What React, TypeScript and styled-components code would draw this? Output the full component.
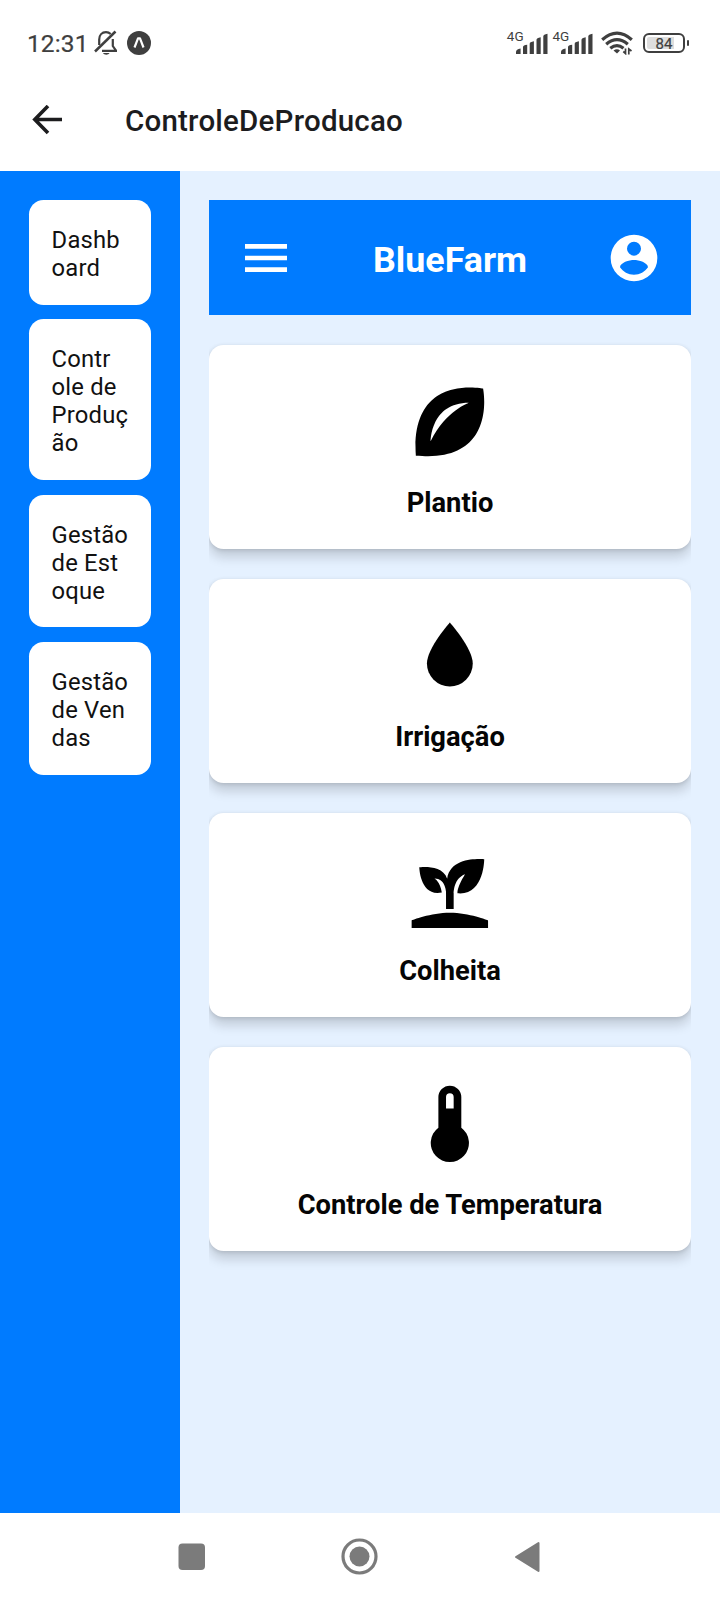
import React from "react";
import styled, { createGlobalStyle } from "styled-components";

const GlobalStyle = createGlobalStyle`
  *, *::before, *::after { box-sizing: border-box; }
  body { margin: 0; background: #ffffff; font-family: Roboto, "Liberation Sans", sans-serif; }
  svg { display: block; flex: none; }
`;

const Screen = styled.div`
  display: flex;
  flex-direction: column;
  width: 720px;
  height: 1600px;
  overflow: hidden;
  background: #ffffff;
`;

const StatusBar = styled.header`
  display: flex;
  align-items: center;
  justify-content: space-between;
  height: 86px;
  padding: 0 31px 0 27px;
  color: #3f3f3f;
`;

const StatusGroup = styled.div`
  display: flex;
  align-items: center;
`;

const Clock = styled.span`
  font-size: 24.5px;
  line-height: 28px;
  letter-spacing: 0.1px;
  width: 67px;
  padding-top: 2px;
  -webkit-text-stroke: 0.2px #3f3f3f;
`;

const AppBadge = styled.div`
  margin-left: 9px;
`;

const Signal = styled.div`
  display: flex;
  height: 24px;
  width: 45.6px;
`;

const NetworkLabel = styled.span`
  width: 9px;
  margin-top: -1px;
  font-size: 13.5px;
  line-height: 13px;
  white-space: nowrap;
`;

const SignalStrength = styled.div`
  margin-top: 2px;
`;

const WifiStatus = styled.div`
  margin: 0 10px 0 3px;
`;

const Battery = styled.div`
  display: flex;
  align-items: center;
  gap: 1.5px;
`;

const BatteryShell = styled.div`
  width: 42px;
  height: 20px;
  padding: 2px;
  border: 2px solid #3f3f3f;
  border-radius: 6px;
`;

const BatteryLevel = styled.div<{ $level: number }>`
  display: flex;
  align-items: center;
  justify-content: center;
  height: 100%;
  padding-top: 1px;
  border-radius: 2px;
  background: linear-gradient(to right, #dedede ${(p) => p.$level}%, transparent ${(p) => p.$level}%);
  font-size: 15px;
  font-weight: 400;
  line-height: 12px;
  -webkit-text-stroke: 0.2px #3f3f3f;
`;

const BatteryTip = styled.div`
  width: 2.5px;
  height: 6px;
  border-radius: 1px;
  background: #3f3f3f;
`;

const AppBar = styled.div`
  display: flex;
  align-items: center;
  height: 85px;
  padding: 0 29px 18px 32px;
  color: #1c1c1e;
`;

const ScreenTitle = styled.h1`
  margin: 2px 0 0 62px;
  font-size: 29.5px;
  font-weight: 500;
  line-height: 36px;
  letter-spacing: 0.22px;
`;

const Body = styled.div`
  display: flex;
  height: 1342px;
`;

const Sidebar = styled.nav`
  display: flex;
  flex-direction: column;
  gap: 14.6px;
  width: 180px;
  padding: 29px 29.3px;
  background: #007bff;
`;

const NavButton = styled.button`
  padding: 26px 21px 22.7px 22.3px;
  border: 0;
  border-radius: 14.6px;
  background: #ffffff;
  color: #111111;
  font: 400 23.8px/28px Roboto, "Liberation Sans", sans-serif;
  letter-spacing: 0.18px;
  text-align: left;
  white-space: pre;
`;

const Content = styled.main`
  flex: 1;
  padding: 29px 29.3px;
  background: #e5f1ff;
`;

const Scroll = styled.div`
  display: flex;
  flex-direction: column;
  gap: 29.2px;
  height: 1284px;
  overflow: hidden;
`;

const Banner = styled.div`
  display: flex;
  align-items: center;
  justify-content: space-between;
  flex: none;
  height: 115.4px;
  padding: 0 28.7px;
  background: #007bff;
  color: #ffffff;
`;

const Brand = styled.h2`
  margin: 4px 0 0;
  font-size: 35.8px;
  font-weight: 700;
  line-height: 44px;
`;

const Card = styled.section`
  display: flex;
  flex-direction: column;
  align-items: center;
  flex: none;
  height: 204.8px;
  padding-top: 31px;
  border-radius: 14.6px;
  background: #ffffff;
  box-shadow: 0 8px 12px rgba(0, 0, 0, 0.16), 0 1px 4px rgba(0, 0, 0, 0.12);
`;

const CardLabel = styled.span`
  margin-top: 18.6px;
  color: #050505;
  font-size: 27.3px;
  font-weight: 700;
  line-height: 34px;
`;

const SystemNav = styled.footer`
  display: flex;
  align-items: center;
  justify-content: space-between;
  height: 87px;
  padding: 0 180.5px 0 178px;
`;

const icons = {
  seed: "M20.7 3.3S19.3 3 17.2 3C11.7 3 2 5.1 3.1 20.9C4.3 21 5.3 21 6.3 21C24.3 21 20.7 3.3 20.7 3.3M7 17C7 17 7 7 17 7C17 7 11 9 7 17Z",
  water: "M12 20A6 6 0 0 1 6 14C6 10 12 3.25 12 3.25C12 3.25 18 10 18 14A6 6 0 0 1 12 20Z",
  sprout:
    "M2 22V20C2 20 7 18 12 18C17 18 22 20 22 20V22H2M11.3 9.1C10.1 5.2 4 6.1 4 6.1C4 6.1 4.2 13.9 9.9 12.7C9.5 9.8 8 9 8 9C10.8 9 11 12.4 11 12.4V17C11.3 17 11.7 17 12 17C12.3 17 12.7 17 13 17V12.8C13 12.8 13 8.9 16 7.9C16 7.9 14 10.9 14 12.9C21 13.6 21 4 21 4C21 4 12.1 3 11.3 9.1Z",
  thermometer:
    "M15 13V5A3 3 0 0 0 9 5V13A5 5 0 1 0 15 13M12 4A1 1 0 0 1 13 5V8H11V5A1 1 0 0 1 12 4Z",
  menu: "M3 6H21V8H3V6M3 11H21V13H3V11M3 16H21V18H3V16Z",
  account:
    "M12 19.2C9.5 19.2 7.29 17.92 6 16C6.03 14 10 12.9 12 12.9C14 12.9 17.97 14 18 16C16.71 17.92 14.5 19.2 12 19.2M12 5A3 3 0 0 1 15 8A3 3 0 0 1 12 11A3 3 0 0 1 9 8A3 3 0 0 1 12 5M12 2A10 10 0 0 0 2 12A10 10 0 0 0 12 22A10 10 0 0 0 22 12A10 10 0 0 0 12 2Z",
};

type IconName = keyof typeof icons;

function Icon({ name, size }: { name: IconName; size: number }) {
  return (
    <svg width={size} height={size} viewBox="0 0 24 24" fill="currentColor" fillRule="evenodd">
      <path d={icons[name]} />
    </svg>
  );
}

function MutedBell() {
  return (
    <svg width="24" height="26" viewBox="0 0 24 26" fill="none" stroke="#3f3f3f" strokeWidth="2.2">
      <path d="M5.200 15V9.500C5.200 5 8 2.200 12 2.200C14 2.200 15.500 2.900 16.700 4M18.800 9V16L22 20.700M8 20.900H23" />
      <path d="M1 21.500L21.500 1.500" strokeWidth="2.500" />
      <path d="M9 23H15.500C14.500 25.200 10 25.200 9 23Z" fill="#3f3f3f" stroke="none" />
    </svg>
  );
}

function ExpoBadge() {
  return (
    <svg width="24" height="24" viewBox="0 0 24 24">
      <circle cx="12" cy="12" r="12" fill="#3f3f3f" />
      <path d="M7.500 16.500L11 7.400H13L16.500 16.500" fill="none" stroke="#fff" strokeWidth="2.200" strokeLinejoin="round" />
    </svg>
  );
}

function SignalBars() {
  return (
    <svg width="33" height="22" viewBox="0 0 33 22" fill="#3f3f3f">
      <path d="M0 21V19Q0 16 4.600 15.500V21ZM7 21V14Q7 12.300 11.200 11.700V21ZM13.700 21V10.700Q13.700 9 17.900 8.300V21ZM20.500 21V6.800Q20.500 5 24.700 4.300V21ZM27.300 21V3.200Q27.300 1.500 31.500 0.700V21Z" />
    </svg>
  );
}

function Wifi() {
  return (
    <svg width="32" height="24" viewBox="0 0 32 24" fill="none" stroke="#3f3f3f" strokeWidth="3.2">
      <path d="M1.200 8.700Q16 -4.300 30.800 8.700M5.200 13.200Q16 4 26.800 13.200M9.300 17.300Q16 12 22.500 17.300" />
      <path d="M12.500 19.500Q16 17 19 19.500L16 22.500Z" fill="#3f3f3f" stroke="none" />
      <path d="M24.500 17.500V22.500L22.300 20.500M27.800 23.500V18L30.500 20" strokeWidth="1.700" />
    </svg>
  );
}

const navItems = ["Dashb\noard", "Contr\nole de\nProduç\não", "Gestão\nde Est\noque", "Gestão\nde Ven\ndas"];

const cards: { icon: IconName; label: string }[] = [
  { icon: "seed", label: "Plantio" },
  { icon: "water", label: "Irrigação" },
  { icon: "sprout", label: "Colheita" },
  { icon: "thermometer", label: "Controle de Temperatura" },
];

function NetworkSignal() {
  return (
    <Signal>
      <NetworkLabel>4G</NetworkLabel>
      <SignalStrength>
        <SignalBars />
      </SignalStrength>
    </Signal>
  );
}

export default function App() {
  return (
    <Screen>
      <GlobalStyle />
      <StatusBar>
        <StatusGroup>
          <Clock>12:31</Clock>
          <MutedBell />
          <AppBadge>
            <ExpoBadge />
          </AppBadge>
        </StatusGroup>
        <StatusGroup>
          <NetworkSignal />
          <NetworkSignal />
          <WifiStatus>
            <Wifi />
          </WifiStatus>
          <Battery>
            <BatteryShell>
              <BatteryLevel $level={78}>84</BatteryLevel>
            </BatteryShell>
            <BatteryTip />
          </Battery>
        </StatusGroup>
      </StatusBar>
      <AppBar>
        <svg width="31" height="30" viewBox="0 0 31 30" fill="none" stroke="currentColor" strokeWidth="3.6">
          <path d="M30 14.500H3M16 1L2.800 14.500L16 28" />
        </svg>
        <ScreenTitle>ControleDeProducao</ScreenTitle>
      </AppBar>
      <Body>
        <Sidebar>
          {navItems.map((item) => (
            <NavButton key={item}>{item}</NavButton>
          ))}
        </Sidebar>
        <Content>
          <Scroll>
            <Banner>
              <Icon name="menu" size={56} />
              <Brand>BlueFarm</Brand>
              <Icon name="account" size={56} />
            </Banner>
            {cards.map((card) => (
              <Card key={card.label}>
                <Icon name={card.icon} size={91.7} />
                <CardLabel>{card.label}</CardLabel>
              </Card>
            ))}
          </Scroll>
        </Content>
      </Body>
      <SystemNav>
        <svg width="28" height="28" viewBox="0 0 28 28">
          <rect x="0.500" y="0.500" width="26.500" height="26.500" rx="4" fill="#7b7b7b" />
        </svg>
        <svg width="37" height="37" viewBox="0 0 37 37">
          <circle cx="18.500" cy="18.500" r="16.500" fill="none" stroke="#7b7b7b" strokeWidth="3.200" />
          <circle cx="18.500" cy="18.500" r="10" fill="#7b7b7b" />
        </svg>
        <svg width="26" height="32" viewBox="0 0 26 32">
          <path d="M2 16L24.500 2V30Z" fill="#7b7b7b" stroke="#7b7b7b" strokeWidth="2" strokeLinejoin="round" />
        </svg>
      </SystemNav>
    </Screen>
  );
}
